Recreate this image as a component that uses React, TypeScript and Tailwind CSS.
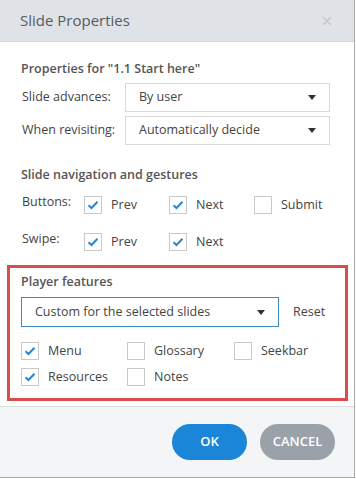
import React from 'react';

const font = { fontFamily: '"Open Sans", "Noto Sans", sans-serif' };

function Caret() {
  return (
    <svg width="8" height="5" viewBox="0 0 8 5" aria-hidden="true">
      <path d="M0 0h8L4 5z" fill="#333" />
    </svg>
  );
}

function Select({ value, className }: { value: string; className: string }) {
  return (
    <div className={`flex items-center justify-between bg-white pl-[13px] pr-[13px] text-[12.5px] text-[#444] ${className}`}>
      <span>{value}</span>
      <Caret />
    </div>
  );
}

function Check({ checked, label, className = '' }: { checked: boolean; label: string; className?: string }) {
  return (
    <div className={`flex items-center gap-[9px] ${className}`}>
      <div className="flex h-[18px] w-[18px] shrink-0 items-center justify-center border border-[#c9c9c9] bg-white">
        {checked && (
          <svg width="12" height="10" viewBox="0 0 12 10" aria-hidden="true">
            <path d="M1.5 5.2 4.5 8 10.5 1.8" fill="none" stroke="#2a86cc" strokeWidth="2" />
          </svg>
        )}
      </div>
      <span className="text-[12.5px] leading-[18px] text-[#444]">{label}</span>
    </div>
  );
}

export default function App() {
  return (
    <div className="flex h-[478px] w-[355px] flex-col border-r border-b border-[#a9a9a9] bg-white" style={font}>
      <div className="flex h-[42px] shrink-0 items-center justify-between border-b border-[#d2d6da] bg-[#dfe3e7] pl-[20px] pr-[22px]">
        <span className="text-[15px] text-[#555b61]">Slide Properties</span>
        <svg width="10" height="10" viewBox="0 0 10 10" aria-hidden="true">
          <path d="M1 1l8 8M9 1l-8 8" stroke="#c4c9ce" strokeWidth="1.6" />
        </svg>
      </div>

      <div className="flex flex-col px-[21px] pt-[17px]">
        <div className="text-[12.5px] font-semibold leading-[20px] text-[#555]">Properties for "1.1 Start here"</div>
        <div className="mt-[4px] flex flex-col gap-[4px]">
          <div className="flex items-center">
            <span className="w-[104px] pl-px text-[12.5px] text-[#444]">Slide advances:</span>
            <Select value="By user" className="h-[29px] w-[205px] border border-[#d9d9d9]" />
          </div>
          <div className="flex items-center">
            <span className="w-[104px] pl-px text-[12.5px] text-[#444]">When revisiting:</span>
            <Select value="Automatically decide" className="h-[29px] w-[205px] border border-[#d9d9d9]" />
          </div>
        </div>

        <div className="mt-[20px] text-[12.5px] font-semibold leading-[20px] text-[#555]">Slide navigation and gestures</div>
        <div className="mt-[11px] flex h-[18px] items-center">
          <span className="-mt-[6px] w-[63px] pl-px text-[12.5px] leading-[18px] text-[#444]">Buttons:</span>
          <Check checked label="Prev" className="w-[85px]" />
          <Check checked label="Next" className="w-[85px]" />
          <Check checked={false} label="Submit" />
        </div>
        <div className="mt-[19px] flex h-[18px] items-center">
          <span className="-mt-[6px] w-[63px] pl-px text-[12.5px] leading-[18px] text-[#444]">Swipe:</span>
          <Check checked label="Prev" className="w-[85px]" />
          <Check checked label="Next" className="w-[85px]" />
        </div>
      </div>

      <div className="mx-[7px] mt-[14px] flex w-[341px] flex-col border-[3px] border-[#db4d4a] pt-[4px] pb-[12px] pl-[11px]">
        <div className="text-[12.5px] font-semibold leading-[20px] text-[#555]">Player features</div>
        <div className="mt-[5px] flex items-center">
          <Select value="Custom for the selected slides" className="h-[30px] w-[258px] border border-[#3d8ac4]" />
          <span className="ml-[14px] text-[12.5px] text-[#444]">Reset</span>
        </div>
        <div className="mt-[15px] flex">
          <Check checked label="Menu" className="w-[106px]" />
          <Check checked={false} label="Glossary" className="w-[107px]" />
          <Check checked={false} label="Seekbar" />
        </div>
        <div className="mt-[8px] flex">
          <Check checked label="Resources" className="w-[106px]" />
          <Check checked={false} label="Notes" />
        </div>
      </div>

      <div className="mt-[5px] flex flex-1 justify-end gap-[13px] border-t border-[#dcdfe2] bg-[#f4f5f6] pt-[17px] pr-[19px]">
        <button className="h-[36px] w-[75px] rounded-full bg-[#1b86d8] text-[13px] font-semibold text-white">OK</button>
        <button className="h-[36px] w-[75px] rounded-full bg-[#9aa1a8] text-[13px] font-semibold text-white">CANCEL</button>
      </div>
    </div>
  );
}
